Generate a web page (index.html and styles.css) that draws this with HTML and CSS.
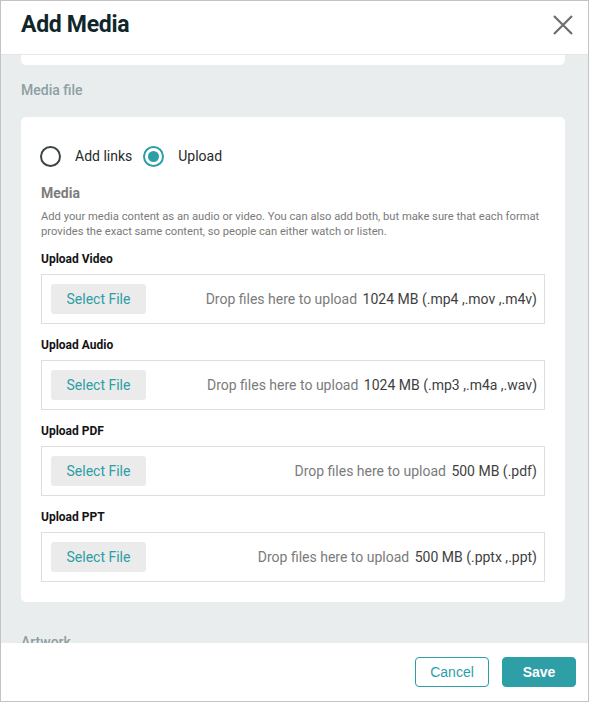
FILE: index.html
```html
<!DOCTYPE html>
<html>
<head>
<meta charset="utf-8">
<link rel="stylesheet" href="styles.css">
</head>
<body>
<div class="window">
  <div class="header">
    <h1 class="title">Add Media</h1>
    <button class="close" aria-label="Close">
      <svg width="20" height="20" viewBox="0 0 20 20"><path d="M1 1 L19 19 M19 1 L1 19" stroke="#6e6e6e" stroke-width="2.2" fill="none"/></svg>
    </button>
  </div>
  <div class="body">
    <div class="stub"></div>
    <div class="section-label">Media file</div>
    <div class="card">
      <div class="radios">
        <label class="radio"><span class="dot"></span><span>Add links</span></label>
        <label class="radio checked"><span class="dot"></span><span>Upload</span></label>
      </div>
      <div class="media-title">Media</div>
      <p class="desc">Add your media content as an audio or video. You can also add both, but make sure that each format provides the exact same content, so people can either watch or listen.</p>

      <div class="group">
        <div class="field-label">Upload Video</div>
        <div class="dropzone">
          <span class="select">Select File</span>
          <span class="hint">Drop files here to upload <span class="limit">1024 MB (.mp4 ,.mov ,.m4v)</span></span>
        </div>
      </div>
      <div class="group">
        <div class="field-label">Upload Audio</div>
        <div class="dropzone">
          <span class="select">Select File</span>
          <span class="hint">Drop files here to upload <span class="limit">1024 MB (.mp3 ,.m4a ,.wav)</span></span>
        </div>
      </div>
      <div class="group">
        <div class="field-label">Upload PDF</div>
        <div class="dropzone">
          <span class="select">Select File</span>
          <span class="hint">Drop files here to upload <span class="limit">500 MB (.pdf)</span></span>
        </div>
      </div>
      <div class="group">
        <div class="field-label">Upload PPT</div>
        <div class="dropzone">
          <span class="select">Select File</span>
          <span class="hint">Drop files here to upload <span class="limit">500 MB (.pptx ,.ppt)</span></span>
        </div>
      </div>
    </div>
    <div class="section-label artwork">Artwork</div>
  </div>
  <div class="footer">
    <button class="btn cancel">Cancel</button>
    <button class="btn save">Save</button>
  </div>
</div>
</body>
</html>
```

FILE: styles.css
```css
* { box-sizing: border-box; }
html, body { margin: 0; padding: 0; }
body { font-family: Roboto, "Liberation Sans", sans-serif; background: #fff; }

.window {
  width: 589px;
  height: 702px;
  border: 1px solid #c3c3c3;
  display: flex;
  flex-direction: column;
  overflow: hidden;
  background: #fff;
}

.header {
  height: 54px;
  flex: none;
  border-bottom: 1px solid #e4e6e7;
  display: flex;
  align-items: center;
  justify-content: space-between;
  padding: 0 14px 6px 20px;
}
.title {
  margin: 0;
  font-family: Roboto, "Noto Sans", sans-serif;
  font-weight: 700;
  font-size: 23px;
  color: #0f272b;
  letter-spacing: -0.3px;
}
.close {
  border: 0;
  background: none;
  padding: 0;
  width: 22px;
  height: 22px;
  display: flex;
  align-items: center;
  justify-content: center;
}

.body {
  flex: 1;
  background: #e9edee;
  overflow: hidden;
  padding: 0 23px 0 20px;
}
.stub {
  height: 10px;
  background: #fff;
  border-radius: 0 0 5px 5px;
}
.section-label {
  margin: 15px 0 17px;
  font-size: 14px;
  line-height: 20px;
  font-weight: 500;
  color: #8d9fa2;
}
.section-label.artwork { margin-top: 30px; }

.card {
  background: #fff;
  border-radius: 5px;
  padding: 29px 20px 20px 20px;
}

.radios {
  display: flex;
  align-items: center;
  height: 20px;
  gap: 11px;
  margin-left: -1px;
}
.radio {
  display: flex;
  align-items: center;
  gap: 14px;
  font-size: 14px;
  color: #1f2a2c;
}
.dot {
  width: 21px;
  height: 21px;
  border-radius: 50%;
  border: 2px solid #3c4446;
  display: inline-block;
  position: relative;
}
.radio.checked .dot {
  border-color: #2b9ea6;
}
.radio.checked .dot::after {
  content: "";
  position: absolute;
  left: 3px;
  top: 3px;
  width: 11px;
  height: 11px;
  border-radius: 50%;
  background: #2b9ea6;
}

.media-title {
  margin-top: 17px;
  font-size: 14px;
  line-height: 20px;
  font-weight: 700;
  color: #7d7d7d;
}
.desc {
  margin: 6px 0 0;
  font-size: 11.2px;
  line-height: 15px;
  color: #7a7a7a;
}

.group { margin-top: 14px; }
.desc + .group { margin-top: 13px; }
.field-label {
  font-size: 12px;
  line-height: 14px;
  font-weight: 700;
  color: #141414;
  margin-bottom: 8px;
}
.dropzone {
  height: 50px;
  border: 1px solid #dedede;
  display: flex;
  align-items: center;
  justify-content: space-between;
  padding: 0 7px 0 9px;
}
.select {
  width: 95px;
  height: 30px;
  background: #ebebeb;
  border-radius: 3px;
  color: #2b9ea6;
  font-size: 14px;
  display: flex;
  align-items: center;
  justify-content: center;
}
.hint {
  font-size: 14px;
  color: #7b7b7b;
}
.limit {
  color: #3f3f3f;
  margin-left: 2px;
}

.footer {
  height: 58px;
  flex: none;
  background: #fff;
  display: flex;
  align-items: center;
  justify-content: flex-end;
  gap: 13px;
  padding: 0 12px 0 0;
}
.btn {
  height: 30px;
  border-radius: 4px;
  font-family: "Liberation Sans", Arial, sans-serif;
  font-size: 14px;
  padding: 0;
}
.cancel {
  width: 74px;
  background: #fff;
  border: 1px solid #2b9ea6;
  color: #2b9ea6;
}
.save {
  width: 74px;
  background: #2e9ea7;
  border: 1px solid #2e9ea7;
  color: #fff;
  font-weight: 700;
}
```
